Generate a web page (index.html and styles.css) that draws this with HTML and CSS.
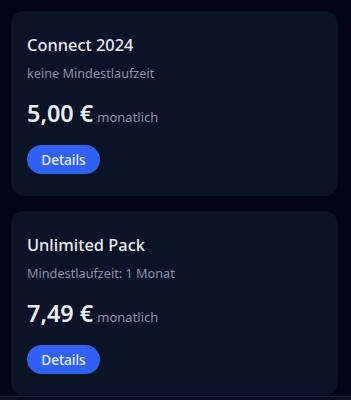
FILE: index.html
```html
<!DOCTYPE html>
<html lang="de">

<head>
	<meta charset="utf-8">
	<title>Pakete</title>
	<link rel="stylesheet" href="styles.css">
</head>

<body>
	<!-- Plan list -->
	<div class="plans">
		<!-- Connect 2024 -->
		<div class="plan-card">
			<h3 class="plan-title">Connect 2024</h3>
			<p class="plan-term">keine Mindestlaufzeit</p>
			<p class="plan-price"><span class="amount">5,00 €</span> <span class="period">monatlich</span></p>
			<button class="btn">Details</button>
		</div>
		<!-- Unlimited Pack -->
		<div class="plan-card">
			<h3 class="plan-title">Unlimited Pack</h3>
			<p class="plan-term">Mindestlaufzeit: 1 Monat</p>
			<p class="plan-price"><span class="amount">7,49 €</span> <span class="period">monatlich</span></p>
			<button class="btn">Details</button>
		</div>
	</div>
	<div class="bottom-bar"></div>
</body>

</html>
```

FILE: styles.css
```css
/* Page background and font */
body {
	margin: 0;
	background-color: #03041a;
	font-family: "Noto Sans", "Open Sans", sans-serif;
	color: #e8eaf0;
	height: 400px;
	overflow: hidden;
}

/* Stack of cards */
.plans {
	display: flex;
	flex-direction: column;
	gap: 15px;
	padding: 11px 13px 0 11px;
}

/* Single plan card */
.plan-card {
	background-color: #0b1329;
	border-radius: 14px;
	padding: 23px 16px 22px 16px;
	height: 140px;
}

.plan-title {
	margin: 0;
	font-size: 16.4px;
	font-weight: 500;
	line-height: 22px;
	color: #e9ebf1;
}

.plan-term {
	margin: 8px 0 0 0;
	font-size: 12.7px;
	line-height: 18px;
	color: #8b91a3;
}

.plan-price {
	margin: 16px 0 0 0;
	line-height: 30px;
}

.amount {
	font-size: 23.4px;
	font-weight: 600;
	color: #eceef3;
}

.period {
	font-size: 13px;
	color: #8b91a3;
}

/* Pill button */
.btn {
	display: block;
	margin-top: 13px;
	width: 73px;
	height: 29px;
	border: none;
	border-radius: 15px;
	background-color: #2f62f4;
	color: #e8edff;
	font-family: inherit;
	font-size: 13.5px;
	font-weight: 500;
	padding: 0;
}

/* Thin line at bottom of screen */
.bottom-bar {
	margin-top: 0;
	border-top: 1px solid #1a2036;
	height: 10px;
	background-color: #0a0d20;
}
```
